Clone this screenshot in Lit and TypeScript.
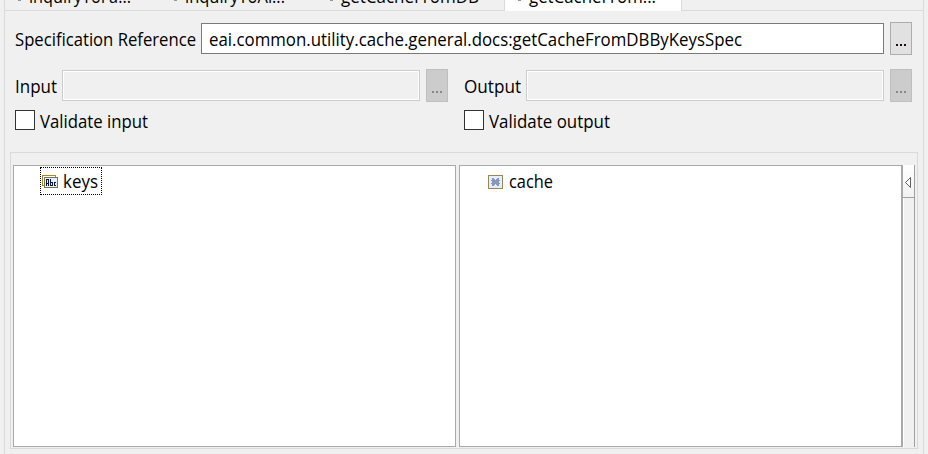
import { LitElement, html, css, svg } from "lit";
import { customElement, property } from "lit/decorators.js";

/** A single line of text set to a fixed advance width. */
@customElement("fit-text")
class FitText extends LitElement {
  @property({ type: Number }) width = 100;
  @property() text = "";
  static styles = css`
    :host { display: block; flex: none; height: 26px; }
    svg { display: block; height: 26px; overflow: visible; }
    text { font: 18px "Open Sans", "Noto Sans", sans-serif; fill: #000; }
  `;
  render() {
    return html`<svg width=${this.width} height="26">
      <text x="0" y="19" textLength=${this.width} lengthAdjust="spacingAndGlyphs">${this.text}</text>
    </svg>`;
  }
}

@customElement("browse-button")
class BrowseButton extends LitElement {
  @property({ type: Boolean, reflect: true }) disabled = false;
  static styles = css`
    :host { display: block; flex: none; box-sizing: border-box; width: 22px; height: 33px;
      border: 1px solid #adadad; background: #e1e1e1; color: #1a1010; }
    :host([disabled]) { border-color: #bfbfbf; background: #ccc; color: #8c8585; }
    svg { display: block; }
  `;
  render() {
    return html`<svg width="20" height="31" fill="currentColor" shape-rendering="crispEdges">
      ${[5, 9, 13].map((x) => svg`<rect x=${x} y="21" width="2" height="2" />`)}
    </svg>`;
  }
}

const keysIcon = html`<svg width="16" height="14" shape-rendering="crispEdges">
  <rect x=".5" y=".5" width="13" height="10" fill="#fff" stroke="#a98536" />
  <rect x="2.5" y="2.5" width="13" height="10" fill="#e8eefb" stroke="#7c7548" />
  <path d="M4 4h3v7H6V9H5v2H4zM5 5v3h1V5zM8 4h1v3h2v4H8zM9 8v2h1V8zM12 7h2v1h-1v2h1v1h-2z" fill="#0a1745" fill-rule="evenodd" />
</svg>`;

const cacheIcon = html`<svg width="15" height="14" shape-rendering="crispEdges">
  <rect x=".5" y=".5" width="14" height="13" fill="#e6edf8" stroke="#9a8650" />
  <path d="M4 3h2v1h1v1h1V4h1V3h2v2h1v1h-1v2h1v1h-1v2H9v-1H8V9H7v1H6v1H4V9H3V8h1V6H3V5h1z" fill="#8499bd" />
</svg>`;

@customElement("app-root")
class AppRoot extends LitElement {
  static styles = css`
    :host { display: flex; flex-direction: column; width: 928px; height: 454px; overflow: hidden;
      background: #f0f0f0; box-sizing: border-box; padding: 0 4px; }
    .frame { box-sizing: border-box; width: 920px; height: 454px; border: solid #dadada; border-width: 0 1px; }
    .tabs { display: flex; height: 11px; overflow: hidden; }
    .tab { box-sizing: border-box; height: 11px; display: flex; border-bottom: 1px solid #dadada; flex: none; }
    .tab.active { background: #fff; border: solid #dadada; border-width: 0 1px; }
    .tab.rest { flex: 1; }
    .dot { width: 3px; height: 1px; background: #8c9aa8; }
    .tab fit-text { margin-top: -16px; }
    .row { display: flex; }
    .spec { margin: 11px 0 0 10px; height: 33px; }
    .io { margin: 14px 0 0 10px; height: 33px; }
    .row fit-text { margin-top: 5px; }
    .field { box-sizing: border-box; height: 31px; margin: 1px 6px 0 5px; display: flex; border: 1px solid #7a7a7a; background: #fff; }
    .field fit-text { margin: 3px 0 0 7px; }
    .field.off { border-color: #ccc; background: #f0f0f0; box-shadow: inset 0 0 0 1px #fff; }
    .half { display: flex; width: 449px; }
    .checks { margin: 7px 0 0 10px; height: 26px; }
    .checks fit-text { margin: 0 0 0 5px; }
    .box { box-sizing: border-box; width: 20px; height: 20px; margin-top: 1px; border: 1px solid #333; background: #fff; }
    .panel { box-sizing: border-box; display: flex; margin: 17px 0 0 5px; width: 908px; height: 297px;
      padding: 12px 2px 1px; border: 1px solid #dadada; }
    .tree { box-sizing: border-box; width: 443px; height: 282px; border: 1px solid #a9a9a9; background: #fff; }
    .tree + .tree { margin-left: 3px; width: 444px; border-right-width: 2px; }
    .node { box-sizing: border-box; display: flex; height: 28px; margin: 1px 0 0 26px; width: 62px; padding: 7px 0 0 2px; }
    .node svg { flex: none; }
    .node fit-text { margin-top: -5px; }
    .keys { border: 1px dotted #000; padding: 7px 0 0 1px; }
    .keys fit-text { margin: -6px 0 0 5px; }
    .cache { margin-left: 26px; padding: 8px 0 0 2px; }
    .cache fit-text { margin: -6px 0 0 6px; }
    .sash { box-sizing: border-box; width: 12px; height: 282px; border-right: 1px solid #a0a0a0; box-shadow: inset 1px 0 #fff; }
    .collapse { box-sizing: border-box; height: 33px; border-bottom: 1px solid #a0a0a0;
      background: linear-gradient(#fff, #f1f1f1); }
    .collapse svg { display: block; }
  `;

  tab(width: number, lead: number, gap: number, textWidth: number, text: string, active = false) {
    return html`<div class="tab ${active ? "active" : ""}" style="width:${width}px">
      <span class="dot" style="margin-left:${lead}px;margin-right:${gap}px"></span>
      <fit-text width=${textWidth} text=${text}></fit-text>
    </div>`;
  }

  io(label: string, labelWidth: number, fieldWidth: number) {
    return html`<div class="half">
      <fit-text width=${labelWidth} text=${label}></fit-text>
      <div class="field off" style="width:${fieldWidth}px"></div>
      <browse-button disabled></browse-button>
    </div>`;
  }

  check(label: string, width: number) {
    return html`<div class="half"><span class="box"></span><fit-text width=${width} text=${label}></fit-text></div>`;
  }

  render() {
    return html`<div class="frame">
      <div class="tabs">
        ${this.tab(157, 13, 8, 102, "inquiryToFa...")}
        ${this.tab(155, 12, 8, 100, "inquiryToAl...")}
        ${this.tab(187, 13, 8, 138, "getCacheFromDB")}
        ${this.tab(178, 13, 8, 127, "getCacheFrom...", true)}
        <div class="tab rest"></div>
      </div>
      <div class="row spec">
        <fit-text width="181" text="Specification Reference"></fit-text>
        <div class="field" style="width:683px">
          <fit-text width="533" text="eai.common.utility.cache.general.docs:getCacheFromDBByKeysSpec"></fit-text>
        </div>
        <browse-button></browse-button>
      </div>
      <div class="row io">${this.io("Input", 42, 358)}${this.io("Output", 57, 358)}</div>
      <div class="row checks">${this.check("Validate input", 108)}${this.check("Validate output", 121)}</div>
      <div class="panel">
        <div class="tree"><div class="node keys">${keysIcon}<fit-text width="35" text="keys"></fit-text></div></div>
        <div class="tree"><div class="node cache">${cacheIcon}<fit-text width="44" text="cache"></fit-text></div></div>
        <div class="sash"><div class="collapse">
          <svg width="11" height="32"><path d="M7.5 12.5v10l-5-5z" fill="#fff" stroke="#606060" /></svg>
        </div></div>
      </div>
    </div>`;
  }
}
